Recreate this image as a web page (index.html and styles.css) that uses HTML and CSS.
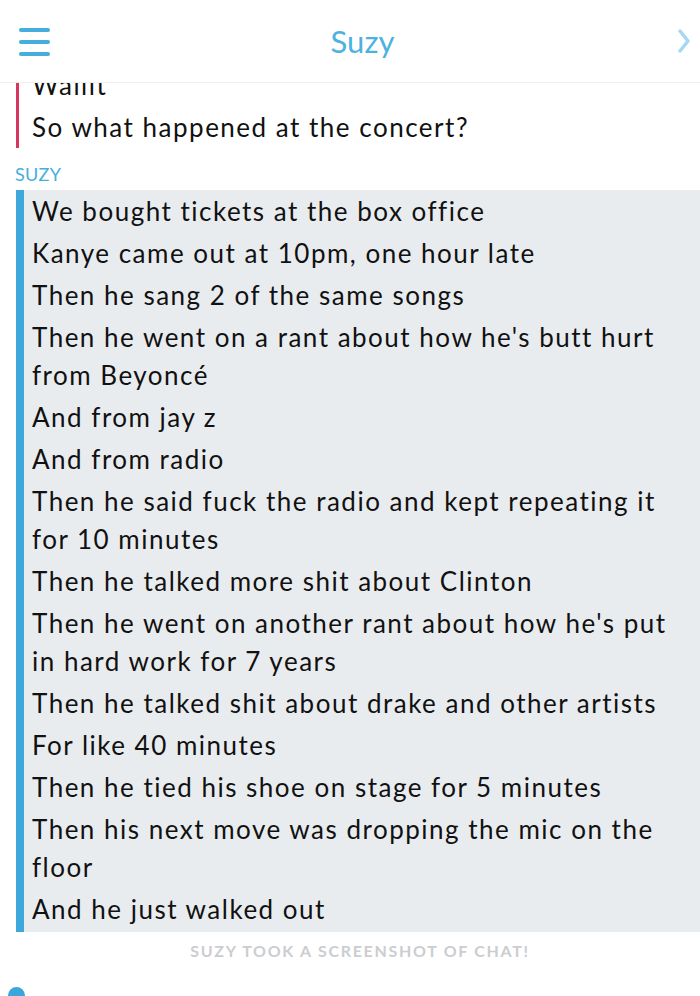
FILE: index.html
```html
<!DOCTYPE html>
<html lang="en">
<head>
    <meta charset="UTF-8">
    <meta name="viewport" content="width=device-width, initial-scale=1.0">
    <title>Suzy</title>
    <link rel="stylesheet" href="styles.css">
</head>

<body>
    <header class="top-bar">
        <div class="menu-icon">
            <div class="bar"></div>
            <div class="bar"></div>
            <div class="bar"></div>
        </div>
        <div class="title">Suzy</div>
        <svg class="chevron" width="14" height="26" viewBox="0 0 14 26">
            <path d="M3 3 L11 13 L3 23" fill="none" stroke="#a6d8ef" stroke-width="3.5" stroke-linecap="round" stroke-linejoin="round"/>
        </svg>
    </header>

    <main class="chat">
        <div class="group me">
            <div class="msg">Wallit</div>
            <div class="msg">So what happened at the concert?</div>
        </div>

        <div class="sender">SUZY</div>
        <div class="group them">
            <div class="msg">We bought tickets at the box office</div>
            <div class="msg">Kanye came out at 10pm, one hour late</div>
            <div class="msg">Then he sang 2 of the same songs</div>
            <div class="msg">Then he went on a rant about how he's butt hurt from Beyoncé</div>
            <div class="msg">And from jay z</div>
            <div class="msg">And from radio</div>
            <div class="msg">Then he said fuck the radio and kept repeating it for 10 minutes</div>
            <div class="msg">Then he talked more shit about Clinton</div>
            <div class="msg">Then he went on another rant about how he's put in hard work for 7 years</div>
            <div class="msg">Then he talked shit about drake and other artists</div>
            <div class="msg">For like 40 minutes</div>
            <div class="msg">Then he tied his shoe on stage for 5 minutes</div>
            <div class="msg">Then his next move was dropping the mic on the floor</div>
            <div class="msg">And he just walked out</div>
        </div>

        <div class="notice">SUZY TOOK A SCREENSHOT OF CHAT!</div>
        <div class="typing-dot"></div>
    </main>
</body>
</html>
```

FILE: styles.css
```css
body {
    font-family: Lato, "Open Sans", sans-serif;
    font-variant-ligatures: none;
    background-color: #ffffff;
    margin: 0;
    padding: 0;
    width: 700px;
    height: 996px;
    overflow: hidden;
    color: #111;
}

.top-bar {
    position: relative;
    z-index: 10;
    height: 82px;
    background-color: #ffffff;
    border-bottom: 1px solid #efefef;
    display: flex;
    align-items: center;
    justify-content: space-between;
    padding: 0 9px 0 19px;
}

.menu-icon {
    width: 31px;
    display: flex;
    flex-direction: column;
    gap: 8px;
    margin-top: 1px;
}

.menu-icon .bar {
    height: 4px;
    border-radius: 2px;
    background-color: #45aedd;
}

.title {
    font-size: 31px;
    color: #4cb2df;
    margin-right: 2px;
    margin-top: -1px;
}

.chevron {
    margin-top: -1px;
}

.chat {
    display: flex;
    flex-direction: column;
}

.group {
    font-size: 26px;
    line-height: 38px;
    letter-spacing: 1.5px;
}

.msg {
    padding: 2px 0;
}

.me {
    margin-top: -19px;
    margin-left: 16px;
    border-left: 3px solid #d8365c;
    padding-left: 13px;
}

.sender {
    margin: 16px 0 6px 15px;
    font-size: 18px;
    line-height: 20px;
    letter-spacing: 0.3px;
    color: #45aedd;
}

.them {
    margin-left: 16px;
    background-color: #e9ecef;
    border-left: 8px solid #3ea8dc;
    padding: 0 20px 2px 8px;
}

.notice {
    margin: 9px 0 0 20px;
    text-align: center;
    font-size: 16px;
    font-weight: bold;
    letter-spacing: 1.7px;
    color: #cbcdd0;
}

.typing-dot {
    width: 17px;
    height: 17px;
    border-radius: 50%;
    background-color: #3aa6dc;
    margin: 27px 0 0 8px;
}
```
